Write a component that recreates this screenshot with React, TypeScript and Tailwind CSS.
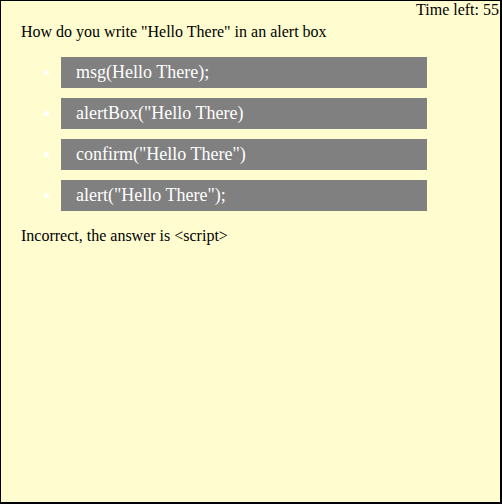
const OPTIONS = [
  'msg(Hello There);',
  'alertBox("Hello There)',
  'confirm("Hello There")',
  'alert("Hello There");',
];

export default function App() {
  return (
    <div
      className="w-[502px] h-[504px] bg-[#fffdd0] border-l border-t border-r-2 border-b-2 border-black text-black text-[16px] leading-[18px]"
      style={{ fontFamily: '"Liberation Serif", "Times New Roman", serif' }}
    >
      {/* timer */}
      <div className="text-right pr-[1px] h-[18px]">Time left: 55</div>

      <div className="pl-[20px] mt-[4px]">
        <p>How do you write "Hello There" in an alert box</p>

        <ul className="mt-[16px] flex flex-col gap-[10px]">
          {OPTIONS.map((opt) => (
            <li key={opt} className="flex items-center">
              <span className="ml-[23px] w-[5px] h-[5px] rounded-full bg-white" />
              <span className="ml-[12px] w-[366px] h-[31px] bg-[#808080] text-white text-[18px] leading-[31px] pl-[15px]">
                {opt}
              </span>
            </li>
          ))}
        </ul>

        <p className="mt-[16px]">Incorrect, the answer is &lt;script&gt;</p>
      </div>
    </div>
  );
}
